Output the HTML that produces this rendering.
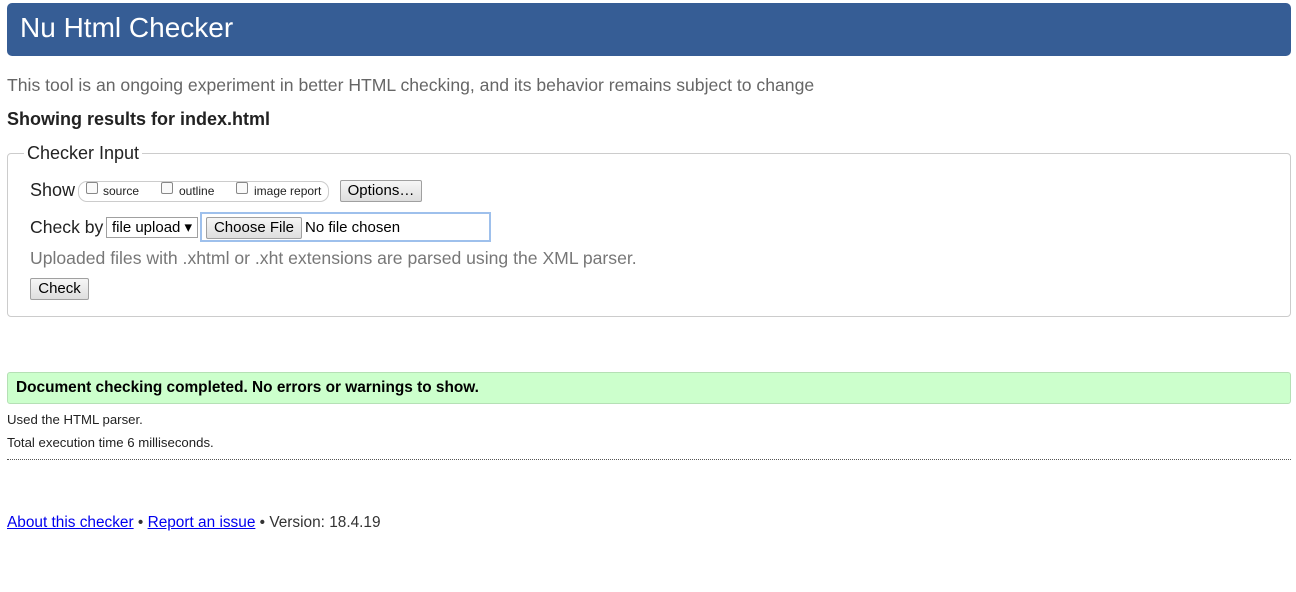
<!DOCTYPE html>
<html><head><style>
*{margin:0;padding:0;box-sizing:border-box}
body{width:1296px;height:592px;background:#fff;font-family:"Liberation Sans",Arial,sans-serif;color:#222;position:relative;overflow:hidden}
.a{position:absolute;white-space:nowrap}
.btn{position:absolute;background:linear-gradient(#f6f6f6,#dedede);border:1px solid #a0a0a0;border-radius:2px;font-size:15px;text-align:center;color:#000}
.cb{position:absolute;width:12px;height:12px;border:1px solid #888;border-radius:2px;background:#fafafa}
</style></head><body>
<div class="a" style="left:7px;top:3px;width:1284px;height:53px;background:#365d95;border-radius:5px"></div>
<div class="a" style="left:20px;top:12px;font-size:28px;color:#fff">Nu Html Checker</div>
<div class="a" style="left:7px;top:75px;font-size:17.6px;color:#666">This tool is an ongoing experiment in better HTML checking, and its behavior remains subject to change</div>
<div class="a" style="left:7px;top:109px;font-size:18px;font-weight:bold;color:#222">Showing results for index.html</div>
<div class="a" style="left:7px;top:153px;width:1284px;height:164px;border:1px solid #ccc;border-radius:4px"></div>
<div class="a" style="left:24px;top:143px;font-size:18px;background:#fff;padding:0 3px;color:#222">Checker Input</div>
<div class="a" style="left:30px;top:180px;font-size:18px">Show</div>
<div class="a" style="left:78px;top:181px;width:251px;height:21px;border:1px solid #ccc;border-radius:9px"></div>
<div class="cb" style="left:86px;top:182px"></div><div class="a" style="left:103px;top:184px;font-size:12px">source</div>
<div class="cb" style="left:161px;top:182px"></div><div class="a" style="left:179px;top:184px;font-size:12px">outline</div>
<div class="cb" style="left:236px;top:182px"></div><div class="a" style="left:254px;top:184px;font-size:12px">image report</div>
<div class="btn" style="left:340px;top:180px;width:82px;height:22px;line-height:20px">Options…</div>
<div class="a" style="left:30px;top:217px;font-size:17.6px">Check by</div>
<div class="a" style="left:106px;top:217px;width:92px;height:21px;border:1px solid #a0a0a0;font-size:15px;line-height:19px;padding-left:5px;color:#000">file upload ▾</div>
<div class="a" style="left:200px;top:212px;width:291px;height:30px;border:2px solid #9ec0ec"></div>
<div class="btn" style="left:206px;top:217px;width:96px;height:22px;line-height:20px">Choose File</div>
<div class="a" style="left:305px;top:219px;font-size:15px;color:#000">No file chosen</div>
<div class="a" style="left:30px;top:248px;font-size:17.6px;color:#777">Uploaded files with .xhtml or .xht extensions are parsed using the XML parser.</div>
<div class="btn" style="left:30px;top:278px;width:59px;height:22px;line-height:20px">Check</div>
<div class="a" style="left:7px;top:372px;width:1284px;height:32px;background:#ccffcc;border:1px solid #b5e0b5;border-radius:3px"></div>
<div class="a" style="left:16px;top:379px;font-size:15.4px;font-weight:bold;color:#000">Document checking completed. No errors or warnings to show.</div>
<div class="a" style="left:7px;top:412px;font-size:13.2px">Used the HTML parser.</div>
<div class="a" style="left:7px;top:435px;font-size:13.2px">Total execution time 6 milliseconds.</div>
<div class="a" style="left:7px;top:459px;width:1284px;border-top:1px dotted #555"></div>
<div class="a" style="left:7px;top:514px;font-size:15.4px;color:#333"><span style="color:#00e;text-decoration:underline">About this checker</span> • <span style="color:#00e;text-decoration:underline">Report an issue</span> • Version: 18.4.19</div>
</body></html>
